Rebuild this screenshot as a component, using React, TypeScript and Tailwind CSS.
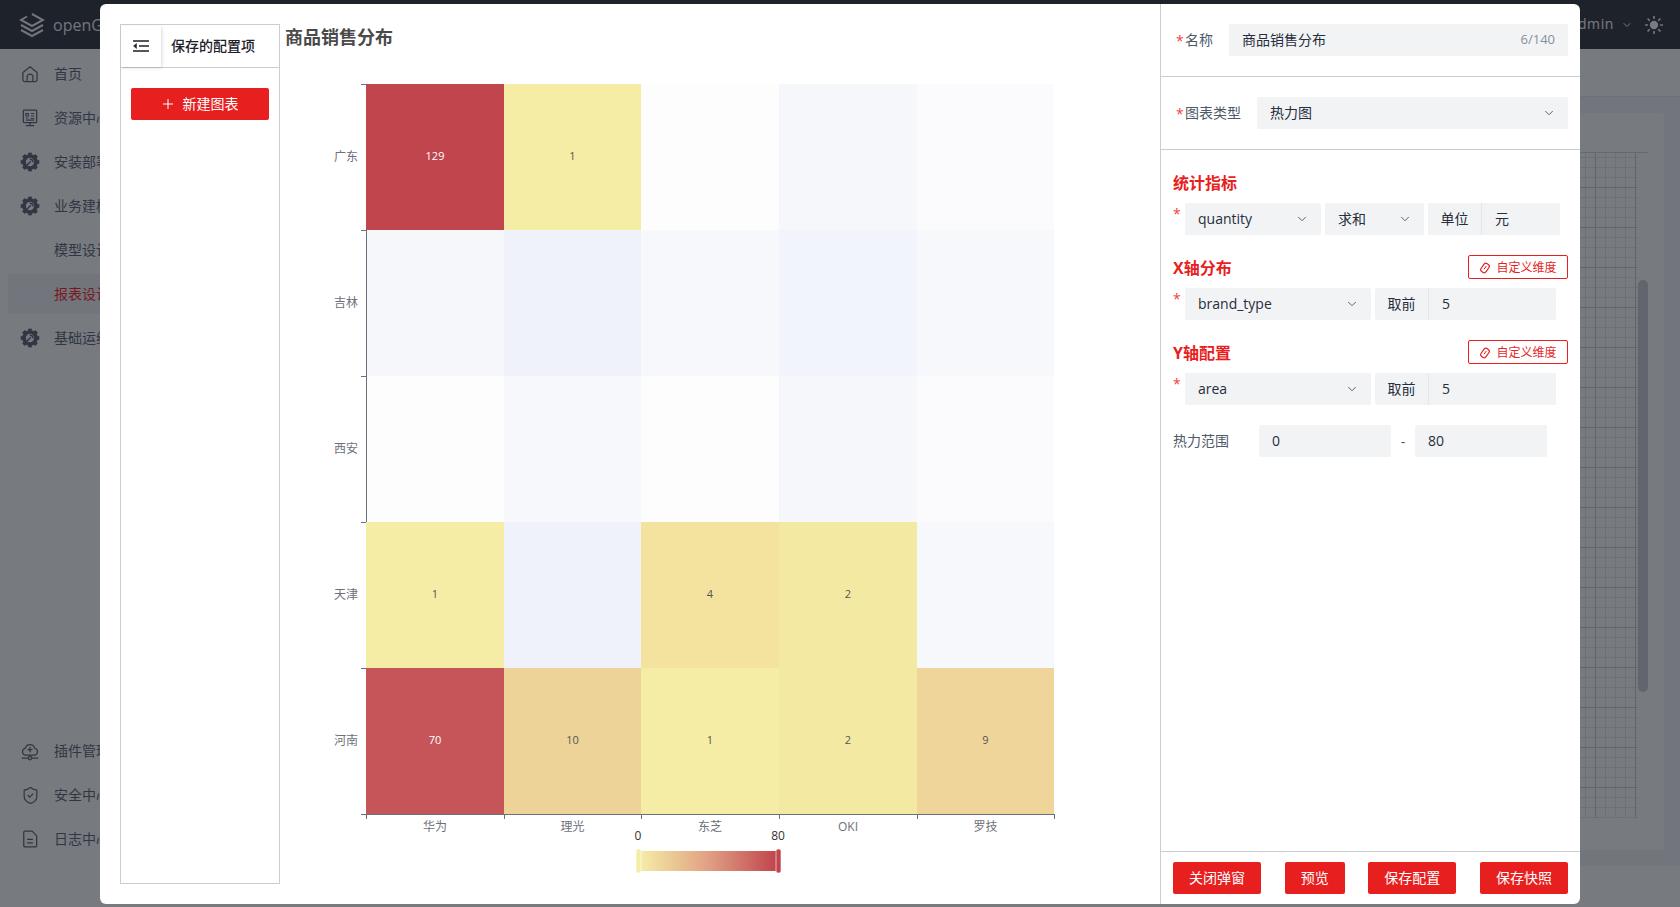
import { ChevronDown, Plus, ShieldCheck, Sun } from "lucide-react";
import type { ReactNode } from "react";

const FONT = "font-['Open_Sans','Noto_Sans_CJK_SC',sans-serif]";

const xLabels = ["华为", "理光", "东芝", "OKI", "罗技"];
const yLabels = ["广东", "吉林", "西安", "天津", "河南"];
const xEdges = [366, 504, 641, 779, 917, 1054];
const yEdges = [84, 230, 376, 522, 668, 814];

const cells: { fill: string; value?: string; light?: boolean }[][] = [
  [{ fill: "#c1454d", value: "129", light: true }, { fill: "#f5eca5", value: "1" }, { fill: "#fdfdfd" }, { fill: "#f6f7fb" }, { fill: "#fbfbfd" }],
  [{ fill: "#f6f7fb" }, { fill: "#eff2fa" }, { fill: "#f7f8fc" }, { fill: "#f2f4fb" }, { fill: "#f7f8fc" }],
  [{ fill: "#fdfdfd" }, { fill: "#f7f8fc" }, { fill: "#fdfdfd" }, { fill: "#f6f7fb" }, { fill: "#fbfbfd" }],
  [{ fill: "#f5eca5", value: "1" }, { fill: "#eff2fa" }, { fill: "#f4e29f", value: "4" }, { fill: "#f4e9a2", value: "2" }, { fill: "#f7f8fc" }],
  [{ fill: "#c55558", value: "70", light: true }, { fill: "#eed399", value: "10" }, { fill: "#f5eca5", value: "1" }, { fill: "#f4e9a2", value: "2" }, { fill: "#efd599", value: "9" }],
];

function Gear() {
  return (
    <svg width="20" height="20" viewBox="0 0 24 24" fill="none" stroke="currentColor">
      <circle cx="12" cy="12" r="7.2" strokeWidth="4.4" />
      {[0, 45, 90, 135, 180, 225, 270, 315].map((a) => (
        <rect key={a} x="9.8" y="0.8" width="4.4" height="4" fill="currentColor" stroke="none" transform={`rotate(${a} 12 12)`} />
      ))}
      <path d="M8.5 15.5L13 11M11.5 8.8a3.2 3.2 0 0 1 4 3.6" strokeWidth="1.8" />
    </svg>
  );
}

function HomeIcon() {
  return (
    <svg width="20" height="20" viewBox="0 0 24 24" fill="none" stroke="currentColor" strokeWidth="1.5">
      <path d="M3.5 10.2L12 3.2l8.5 7V19a2 2 0 0 1-2 2h-13a2 2 0 0 1-2-2z" strokeLinejoin="round" />
      <path d="M8.5 21v-5.5a3.5 3.5 0 0 1 7 0V21" />
    </svg>
  );
}

function ResourceIcon() {
  return (
    <svg width="20" height="20" viewBox="0 0 24 24" fill="none" stroke="currentColor" strokeWidth="1.5">
      <rect x="4" y="2.5" width="16" height="15" rx="1" />
      <path d="M7 6.5h3v3H7zM7 12h3M13 6.5h4M13 9.5h4M13 12.5h4M7 14.5h10" strokeWidth="1.3" />
      <path d="M12 17.5V21M7 21.2h10" />
    </svg>
  );
}

function PluginIcon() {
  return (
    <svg width="20" height="20" viewBox="0 0 24 24" fill="none" stroke="currentColor" strokeWidth="1.5">
      <path d="M7 17a4.2 4.2 0 0 1-.6-8.3 5.8 5.8 0 0 1 11.2 0A4.2 4.2 0 0 1 17 17z" strokeLinejoin="round" />
      <path d="M12 7v6.5M9 10.2h6M12 17v1.5M2 20.5h8M14 20.5h8" />
      <circle cx="12" cy="20.5" r="2" />
    </svg>
  );
}

function LogIcon() {
  return (
    <svg width="20" height="20" viewBox="0 0 24 24" fill="none" stroke="currentColor" strokeWidth="1.5">
      <path d="M6 2.5h8.5L20 8v12.5a1 1 0 0 1-1 1H6a1.5 1.5 0 0 1-1.5-1.5V4A1.5 1.5 0 0 1 6 2.5z" strokeLinejoin="round" />
      <path d="M8.5 12.5h7M8.5 16.5h7" />
    </svg>
  );
}

function TagIcon() {
  return (
    <svg width="12" height="12" viewBox="0 0 12 12" fill="none" stroke="currentColor" strokeWidth="1.2">
      <rect x="3" y="1.2" width="6" height="9.6" rx="2.4" transform="rotate(35 6 6)" />
      <path d="M5 7.2L7.4 4" strokeWidth="1" />
    </svg>
  );
}

function Logo() {
  return (
    <svg width="26" height="26" viewBox="0 0 26 26" fill="none" stroke="currentColor" strokeWidth="2">
      <path d="M13 2 L24 8 L13 14 L2 8 L8 4.5" />
      <path d="M2 13 L13 19 L24 13" />
      <path d="M2 18 L13 24 L24 18" />
    </svg>
  );
}

function NavItem({ icon, label, active }: { icon?: ReactNode; label: string; active?: boolean }) {
  return (
    <div className={`mx-[8px] flex h-[40px] items-center gap-[14px] rounded-[2px] px-[12px] text-[14px] ${active ? "bg-[#f2f3f5] text-[#ff1010]" : "text-[#4e5969]"}`}>
      <span className="flex w-[20px] justify-center text-[#4e5969]">{icon}</span>
      <span className="whitespace-nowrap pb-[2px]">{label}</span>
    </div>
  );
}

function Star() {
  return <span className="w-[12px] shrink-0 self-start pt-[2px] text-[14px] leading-[18px] text-[#f53f3f]">*</span>;
}

function SelectBox({ value, width }: { value: string; width: string }) {
  return (
    <div className={`flex h-[32px] items-center justify-between rounded-[2px] bg-[#f2f3f5] pl-[13px] pr-[12px] text-[14px] text-[#272e3b] ${width}`}>
      <span className="pb-[2px]">{value}</span>
      <ChevronDown className="h-[14px] w-[14px] text-[#4e5969]" strokeWidth={1.6} />
    </div>
  );
}

function AddonInput({ addon, value, width }: { addon: string; value: string; width: string }) {
  return (
    <div className={`flex h-[32px] items-center rounded-[2px] bg-[#f2f3f5] text-[14px] text-[#272e3b] ${width}`}>
      <span className="flex h-full w-[54px] items-center justify-center border-r border-[#e5e6eb] pb-[2px]">{addon}</span>
      <span className="pb-[2px] pl-[13px]">{value}</span>
    </div>
  );
}

function SectionHead({ title, action }: { title: string; action?: boolean }) {
  return (
    <div className="flex h-[24px] items-center justify-between">
      <span className={`text-[16px] font-bold text-[#e71f1f] ${action ? "pt-[2px]" : ""}`}>{title}</span>
      {action && (
        <span className="flex h-[24px] w-[100px] items-center justify-center gap-[5px] rounded-[2px] border border-[#e71f1f] pt-[2px] text-[12px] text-[#e71f1f]">
          <TagIcon />
          自定义维度
        </span>
      )}
    </div>
  );
}

function RedButton({ children, width }: { children: ReactNode; width: string }) {
  return (
    <span className={`flex h-[32px] items-center justify-center rounded-[2px] bg-[#e71f1f] pb-[2px] text-[14px] text-white ${width}`}>{children}</span>
  );
}

function HeatChart() {
  return (
    <svg className="block" width="880" height="840" viewBox="280 54 880 840" fontFamily="'Open Sans','Noto Sans CJK SC',sans-serif">
      <defs>
        <linearGradient id="legend" x1="0" x2="1" y1="0" y2="0">
          <stop offset="0" stopColor="#f5eca5" />
          <stop offset="0.5" stopColor="#e0a084" />
          <stop offset="1" stopColor="#c1454d" />
        </linearGradient>
      </defs>
      {cells.map((row, r) =>
        row.map((cell, c) => (
          <g key={`${r}-${c}`}>
            <rect x={xEdges[c]} y={yEdges[r]} width={xEdges[c + 1] - xEdges[c]} height={yEdges[r + 1] - yEdges[r]} fill={cell.fill} />
            {cell.value && (
              <text
                x={(xEdges[c] + xEdges[c + 1]) / 2}
                y={(yEdges[r] + yEdges[r + 1]) / 2 + 3}
                textAnchor="middle"
                fontSize="11"
                fontWeight={cell.light ? 500 : 400}
                fill={cell.light ? "#ffffff" : "#555555"}
              >
                {cell.value}
              </text>
            )}
          </g>
        ))
      )}
      {/* axes */}
      <path d="M366.5 230V522" stroke="#6e7079" fill="none" />
      <path d="M361 814.5H1054.5" stroke="#6e7079" fill="none" />
      {yEdges.map((y) => (
        <path key={y} d={`M361 ${y + 0.5}H366`} stroke="#6e7079" fill="none" />
      ))}
      {xEdges.map((x) => (
        <path key={x} d={`M${x + 0.5} 814V819`} stroke="#6e7079" fill="none" />
      ))}
      {yLabels.map((l, i) => (
        <text key={l} x="358" y={(yEdges[i] + yEdges[i + 1]) / 2 + 3.5} textAnchor="end" fontSize="12" fill="#6e7079">
          {l}
        </text>
      ))}
      {xLabels.map((l, i) => (
        <text key={l} x={(xEdges[i] + xEdges[i + 1]) / 2} y="831" textAnchor="middle" fontSize="12" fill="#6e7079">
          {l}
        </text>
      ))}
      {/* visual map */}
      <text x="638" y="840" textAnchor="middle" fontSize="12" fill="#333333">0</text>
      <text x="778" y="840" textAnchor="middle" fontSize="12" fill="#333333">80</text>
      <rect x="641" y="851" width="135" height="20" fill="url(#legend)" />
      <rect x="636" y="849" width="5" height="24" rx="2" fill="#f5eca5" stroke="#ffffff" strokeWidth="0.6" />
      <rect x="776" y="849" width="5" height="24" rx="2" fill="#c1454d" stroke="#ffffff" strokeWidth="0.6" />
    </svg>
  );
}

export default function App() {
  return (
    <div className={`relative flex h-[907px] w-[1680px] flex-col overflow-hidden bg-white ${FONT}`}>
      {/* page behind the dialog */}
      <header className="flex h-[49px] shrink-0 items-center justify-between bg-[#1f232e] pl-[19px] pr-[16px] text-[#ffffff]">
        <div className="flex items-center gap-[8px] text-[16px] text-[#f0f0f0]">
          <Logo />
          <span>openGauss</span>
        </div>
        <div className="flex items-center gap-[7px] text-[14px]">
          <span className="pb-[2px] tracking-[0.6px]">admin</span>
          <ChevronDown className="h-[12px] w-[12px]" />
          <Sun className="ml-[4px] h-[20px] w-[20px] fill-current" />
        </div>
      </header>
      <div className="flex min-h-0 flex-1">
        <aside className="flex w-[220px] shrink-0 flex-col pb-[48px] pt-[5px]">
          <div className="flex flex-col gap-[4px]">
            <NavItem icon={<HomeIcon />} label="首页" />
            <NavItem icon={<ResourceIcon />} label="资源中心" />
            <NavItem icon={<Gear />} label="安装部署" />
            <NavItem icon={<Gear />} label="业务建模" />
            <NavItem label="模型设计" />
            <NavItem label="报表设计" active />
            <NavItem icon={<Gear />} label="基础运维" />
          </div>
          <div className="mt-auto flex flex-col gap-[4px]">
            <NavItem icon={<PluginIcon />} label="插件管理" />
            <NavItem icon={<ShieldCheck className="h-[19px] w-[19px]" strokeWidth={1.5} />} label="安全中心" />
            <NavItem icon={<LogIcon />} label="日志中心" />
          </div>
        </aside>
        <main className="flex min-w-0 flex-1 flex-col">
          <div className="h-[48px] shrink-0 border-b border-[#e5e6eb]" />
          <div className="flex min-h-0 flex-1 flex-col bg-[#f2f3f5] p-[16px] pl-0">
            <div className="flex min-h-0 flex-1 flex-col rounded-[2px] bg-white pb-[32px] pr-[16px] pt-[39px]">
              <div className="flex min-h-0 flex-1 border-t border-[#d0d2d6]">
                <div className="flex-1 [background-image:linear-gradient(#c9cbcf_1px,transparent_1px),linear-gradient(90deg,#c9cbcf_1px,transparent_1px),linear-gradient(#e6e7e9_1px,transparent_1px),linear-gradient(90deg,#e6e7e9_1px,transparent_1px)] [background-position:0_34px,15px_0,0_4px,5px_0] [background-size:40px_40px,40px_40px,10px_10px,10px_10px]" />
                <div className="ml-0 mt-[127px] h-[412px] w-[10px] rounded-full bg-[#c9cdd4]" />
              </div>
            </div>
          </div>
          <div className="h-[41px] shrink-0" />
        </main>
      </div>

      {/* mask */}
      <div className="absolute inset-0 bg-[#1d2129]/60" />

      {/* dialog */}
      <div className="absolute left-[100px] top-[4px] flex h-[900px] w-[1480px] overflow-hidden rounded-[6px] bg-white">
        <div className="flex w-[180px] shrink-0 flex-col pb-[20px] pl-[20px] pt-[20px]">
          <div className="flex flex-1 flex-col border border-[#c9cdd4]">
            <div className="flex h-[43px] items-center border-b border-[#c9cdd4]">
              <span className="flex h-[41px] w-[40px] items-center justify-center pb-[1px] shadow-[1px_1px_3px_rgba(0,0,0,0.15)]">
                <svg width="16" height="12" viewBox="0 0 16 12" fill="none" stroke="#1d2129" strokeWidth="1.5">
                  <path d="M0 1H16M6 6H16M0 11H16" />
                  <path d="M3.5 3.5V8.5L0.5 6Z" fill="#1d2129" strokeWidth="0.5" />
                </svg>
              </span>
              <span className="ml-[10px] pb-[2px] text-[14px] font-medium text-[#1d2129]">保存的配置项</span>
            </div>
            <div className="px-[10px] pt-[20px]">
              <span className="flex h-[32px] items-center justify-center gap-[7px] rounded-[2px] bg-[#e71f1f] pr-[2px] text-[14px] text-white">
                <Plus className="h-[16px] w-[16px]" strokeWidth={1.5} />
                <span className="pb-[2px]">新建图表</span>
              </span>
            </div>
          </div>
        </div>

        <div className="min-w-0 flex-1 pl-[5px] pt-[20px]">
          <div className="h-[30px] text-[18px] font-bold leading-[26px] text-[#4a4a4a]">商品销售分布</div>
          <div className="-ml-[5px]">
            <HeatChart />
          </div>
        </div>

        <div className="flex w-[420px] shrink-0 flex-col border-l border-[#c9cdd4]">
          <div className="flex h-[73px] shrink-0 items-center border-b border-[#c9cdd4] pl-[15px] pr-[12px]">
            <span className="w-[9px] text-[14px] text-[#f53f3f]">*</span>
            <span className="w-[44px] pb-[2px] text-[14px] text-[#4e5969]">名称</span>
            <div className="flex h-[32px] flex-1 items-center justify-between rounded-[2px] bg-[#f2f3f5] px-[13px] text-[14px] text-[#272e3b]">
              <span className="pb-[2px]">商品销售分布</span>
              <span className="text-[13px] text-[#86909c]">6/140</span>
            </div>
          </div>
          <div className="flex h-[73px] shrink-0 items-center border-b border-[#c9cdd4] pl-[15px] pr-[12px]">
            <span className="w-[9px] text-[14px] text-[#f53f3f]">*</span>
            <span className="w-[72px] pb-[2px] text-[14px] text-[#4e5969]">图表类型</span>
            <div className="flex-1">
              <SelectBox value="热力图" width="w-full" />
            </div>
          </div>

          <div className="px-[12px]">
            <div className="mt-[21px]">
              <SectionHead title="统计指标" />
            </div>
            <div className="mt-[8px] flex items-center gap-[4px]">
              <div className="-mr-[4px] flex w-[12px] self-stretch"><Star /></div>
              <SelectBox value="quantity" width="w-[136px]" />
              <SelectBox value="求和" width="w-[99px]" />
              <AddonInput addon="单位" value="元" width="w-[132px]" />
            </div>

            <div className="mt-[20px]">
              <SectionHead title="X轴分布" action />
            </div>
            <div className="mt-[9px] flex items-center gap-[4px]">
              <div className="-mr-[4px] flex w-[12px] self-stretch"><Star /></div>
              <SelectBox value="brand_type" width="w-[186px]" />
              <AddonInput addon="取前" value="5" width="w-[181px]" />
            </div>

            <div className="mt-[20px]">
              <SectionHead title="Y轴配置" action />
            </div>
            <div className="mt-[9px] flex items-center gap-[4px]">
              <div className="-mr-[4px] flex w-[12px] self-stretch"><Star /></div>
              <SelectBox value="area" width="w-[186px]" />
              <AddonInput addon="取前" value="5" width="w-[181px]" />
            </div>

            <div className="mt-[20px] flex items-center text-[14px]">
              <span className="w-[86px] pb-[2px] text-[#4e5969]">热力范围</span>
              <span className="flex h-[32px] w-[132px] items-center rounded-[2px] bg-[#f2f3f5] pb-[2px] pl-[13px] text-[#272e3b]">0</span>
              <span className="w-[24px] text-center text-[#4e5969]">-</span>
              <span className="flex h-[32px] w-[132px] items-center rounded-[2px] bg-[#f2f3f5] pb-[2px] pl-[13px] text-[#272e3b]">80</span>
            </div>
          </div>

          <div className="mt-auto flex h-[53px] shrink-0 items-start justify-between border-t border-[#c9cdd4] px-[12px] pt-[10px]">
            <RedButton width="w-[88px]">关闭弹窗</RedButton>
            <RedButton width="w-[60px]">预览</RedButton>
            <RedButton width="w-[88px]">保存配置</RedButton>
            <RedButton width="w-[88px]">保存快照</RedButton>
          </div>
        </div>
      </div>
    </div>
  );
}
